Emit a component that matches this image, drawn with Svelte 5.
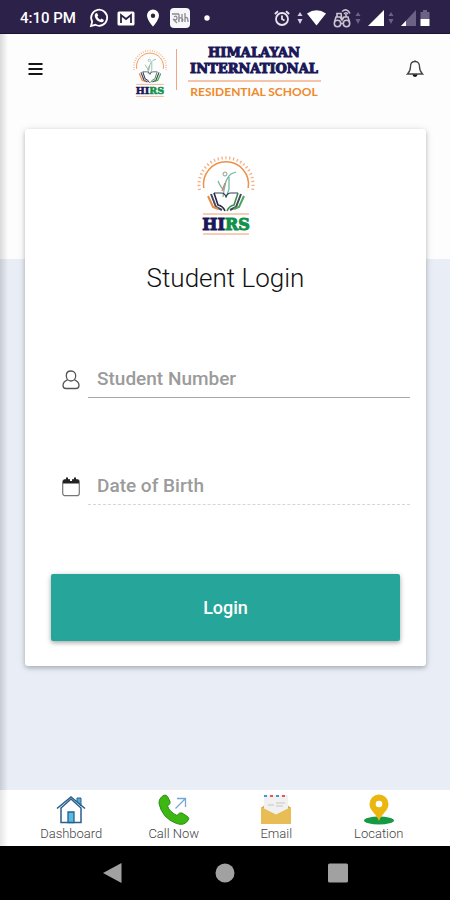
<script lang="ts">
	let studentNumber = $state('');
	let birthDate = $state('');

	const tabs = [
		{ id: 'dashboard', label: 'Dashboard' },
		{ id: 'call', label: 'Call Now' },
		{ id: 'email', label: 'Email' },
		{ id: 'location', label: 'Location' }
	];

	function login(event: SubmitEvent) {
		event.preventDefault();
	}
</script>

{#snippet emblem(cls: string)}
	<svg class={cls} viewBox="0 0 60 80" role="img" aria-label="HIRS">
		<!-- sun -->
		<path d="M7.800 33A22.500 22.500 0 1 1 52.200 33" fill="none" stroke="#f0914a" stroke-width="1.500" />
		<path d="M3.500 35A27 27 0 1 1 56.500 35" fill="none" stroke="#f4b184" stroke-width="3" stroke-dasharray="1.300 2.600" />
		<!-- figure -->
		<path d="M22 26q3 7 6 9l2-9q2-5 5-7l5-2M28 35l-1 7M33 22v12l-3 9" fill="none" stroke="#6fb9a2" stroke-width="1.300" />
		<circle cx="29" cy="19" r="2" fill="none" stroke="#8f9a90" />
		<path d="M26 36l3-8" stroke="#e57a66" stroke-width="1.300" />
		<!-- open book -->
		<path d="M18 38h7q4 0 5 4 1-4 5-4h7" fill="none" stroke="#38405a" stroke-width="1.200" />
		<path d="M18 38l4 12q5 1 7 6" fill="none" stroke="#26264e" stroke-width="1.600" />
		<path d="M42 38l-4 12q-5 1-7 6" fill="none" stroke="#3e8f50" stroke-width="1.600" />
		<path d="M15 39l5 13 6 3M45 39l-5 13-6 3" fill="none" stroke="#44485a" stroke-width="2" />
		<path d="M12 41l5 11 5 2" fill="none" stroke="#e98a45" stroke-width="2" />
		<path d="M48 41l-5 11-5 2" fill="none" stroke="#4ba75b" stroke-width="2" />
		<path d="M7 59h46M7 79h46" stroke="#ef9a72" stroke-width="1.200" />
		<text x="30" y="75" text-anchor="middle"><tspan class="navy">HI</tspan><tspan class="green">RS</tspan></text>
	</svg>
{/snippet}

{#snippet arrows(cls: string)}
	<svg class={cls} width="6" height="14" viewBox="0 0 6 14" aria-hidden="true">
		<path d="M0.500 5L3 1l2.500 4zM0.500 8h5L3 13z" fill="currentColor" />
	</svg>
{/snippet}

<div class="screen">
	<div class="status">
		<span class="time">4:10 PM</span>
		<div class="notices">
			<svg width="20" height="20" viewBox="0 0 20 20" fill="none" stroke="#fff" stroke-width="1.800">
				<path d="M2 18l1.200-4.300a8 8 0 1 1 3.200 3.100z" />
				<path d="M6.500 5.500l1.500-.5 1.300 2.600-1 1.200q1 2 3 2.900l1.100-1.100 2.500 1.300q-.3 2.600-2.600 2.300-5.600-1-6.600-6.300 0-1.500.8-2.400z" fill="#fff" stroke="none" />
			</svg>
			<svg width="20" height="20" viewBox="0 0 20 20">
				<rect x="1.500" y="3.500" width="17" height="14" rx="1.500" fill="#fff" />
				<path d="M5 15V7l5 4 5-4v8" fill="none" stroke="#2c2149" stroke-width="1.800" />
			</svg>
			<svg width="20" height="20" viewBox="0 0 20 20">
				<path d="M10 1.500a6 6 0 0 0-6 6c0 4.500 6 11 6 11s6-6.500 6-11a6 6 0 0 0-6-6zm0 4a2.200 2.200 0 1 1 0 4.400 2.200 2.200 0 0 1 0-4.400z" fill="#fff" />
			</svg>
			<svg width="20" height="20" viewBox="0 0 20 20">
				<rect width="20" height="20" rx="4" fill="#f7f6f8" />
				<path d="M2 6h7M4 9q3-2 3 1t-4 1l4 4M9 6v8q-1-5 2-4t1 4M12 6v8m3-9v9m0-4q3-2 3 4" fill="none" stroke="#8d8a92" stroke-width="1.300" />
			</svg>
			<svg width="20" height="20" viewBox="0 0 20 20"><circle cx="10" cy="10" r="2.700" fill="#fff" /></svg>
		</div>
		<div class="signals">
			<svg width="16" height="16" viewBox="0 0 16 16" fill="none" stroke="#e9e6ef" stroke-width="1.800">
				<circle cx="8" cy="9" r="6" />
				<path d="M8 5.500V9l2.500 1.500M.8 4L4 1.300M15.200 4L12 1.300" />
			</svg>
			<span>
				{@render arrows('bright')}
				<svg width="19" height="16" viewBox="0 0 19 16"><path d="M0 3.500Q9.500-3 19 3.500L9.500 15.500z" fill="#fff" /></svg>
			</span>
			<span>
				<svg width="18" height="20" viewBox="0 0 18 20" fill="none" stroke="#c9c5d2" stroke-width="1.600">
					<circle cx="4.500" cy="15.500" r="3.200" />
					<circle cx="13.500" cy="15.500" r="3.200" />
					<path d="M1.500 14l1.500-5h4l2 3 2-3h4l1.500 5M7 15.500h4M4 9V5.500h4L9 12M9 3.500q5-4 8 2M11 6q2-2.500 4 0M13 6v3" />
				</svg>
				{@render arrows('dim')}
			</span>
			<span>
				<svg width="16" height="16" viewBox="0 0 16 16"><path d="M16 0v16H0z" fill="#fff" /></svg>
				{@render arrows('dim')}
			</span>
			<span>
				<svg width="15" height="16" viewBox="0 0 15 16">
					<path d="M15 0v16H0z" fill="#6b6286" />
					<path d="M5 10.700V16H0z" fill="#fff" />
				</svg>
				<svg width="10" height="16" viewBox="0 0 10 16">
					<path d="M3 0h4v2h2.500v7h-9V2H3z" fill="#6b6286" />
					<path d="M.5 9h9v7h-9z" fill="#fff" />
				</svg>
			</span>
		</div>
	</div>

	<div class="page">
		<header>
			<button class="icon-button" aria-label="Menu">
				<svg width="16" height="14" viewBox="0 0 16 14"><path d="M0.500 2h14M0.500 7h14M0.500 12h14" stroke="#151515" stroke-width="2" /></svg>
			</button>
			<div class="brand">
				{@render emblem('brand-emblem')}
				<div class="brand-name">
					<span class="school">HIMALAYAN<br />INTERNATIONAL</span>
					<span class="kind">RESIDENTIAL SCHOOL</span>
				</div>
			</div>
			<button class="icon-button bell" aria-label="Notifications">
				<svg width="18" height="18" viewBox="0 0 18 18">
					<path d="M9 1.500C5.500 1.500 4.500 4 4.500 6.500c0 4-1 5.500-3 7.500h15c-2-2-3-3.500-3-7.500 0-2.500-1-5-4.500-5zM9 .3v1.200" fill="none" stroke="#444" stroke-width="1.300" />
					<path d="M6.500 14.500h5a2.500 2.500 0 0 1-5 0z" fill="#111" />
				</svg>
			</button>
		</header>

		<main>
			<form class="card" onsubmit={login}>
				{@render emblem('card-emblem')}
				<h1>Student Login</h1>

				<div class="field">
					<label for="student-number" aria-label="Student Number">
						<svg width="18" height="20" viewBox="0 0 18 20" fill="none" stroke="#555" stroke-width="1.300">
							<path d="M9 1C6 1 4.300 3 4.300 5.800S6 11 9 11s4.700-2.400 4.700-5.200S12 1 9 1z" />
							<path d="M5.500 9.800C2.500 11 1 13 1 15.500q0 3 3 3h10q3 0 3-3c0-2.500-1.500-4.500-4.500-5.700" />
						</svg>
					</label>
					<input id="student-number" type="text" placeholder="Student Number" bind:value={studentNumber} />
				</div>

				<div class="field">
					<label for="birth-date" aria-label="Date of Birth">
						<svg width="18" height="20" viewBox="0 0 18 20">
							<rect x=".7" y="2.700" width="16.600" height="16" rx="2.500" fill="none" stroke="#777" stroke-width="1.200" />
							<path d="M1 6.500V4q0-1.500 2-1.500h12q2 0 2 1.500v2.500z" fill="#222" />
							<path d="M5 0.500v4M13 0.500v4" stroke="#222" stroke-width="2" />
							<path d="M8 2h2v2H8z" fill="#fff" />
						</svg>
					</label>
					<input id="birth-date" class="dotted" type="text" placeholder="Date of Birth" bind:value={birthDate} />
				</div>

				<button class="login" type="submit">Login</button>
			</form>
		</main>

		<nav class="tabs">
			{#each tabs as tab (tab.id)}
				<a href="#{tab.id}">
					<svg width="32" height="32" viewBox="0 0 32 32" aria-hidden="true">
						{#if tab.id === 'dashboard'}
							<path d="M22 4h4v8l-4-4z" fill="#4bb3d8" stroke="#2a5f8c" />
							<path d="M6 14v14.500h20V14L16 5z" fill="#fff" stroke="#2a5f8c" stroke-width="1.500" />
							<path d="M2 14.500L16 3l14 11.500" fill="none" stroke="#2a5f8c" stroke-width="1.600" />
							<path d="M13 18h6v10.500h-6z" fill="#54bde4" stroke="#2a5f8c" stroke-width="1.300" />
						{:else if tab.id === 'call'}
							<path d="M3.500 3Q7-.5 9.500 2.500l2.500 5q1 2-2.500 4.500 2 6 9.500 9.500 2.500-3.500 5-2.500l5.500 3.500q2.500 2 0 4.500-3.500 5-11 2.500Q4 24 1 9.500 .5 5.500 3.500 3z" fill="#3db712" stroke="#2b8f12" />
							<path d="M17.500 14.500L27.500 4.500M19 4.500h8.500V13" fill="none" stroke="#74a9d6" stroke-width="1.300" />
						{:else if tab.id === 'email'}
							<path d="M1 14l5-4h20l5 4v15H1z" fill="#d9a63d" />
							<path d="M4 1h24v18l-12 6-12-6z" fill="#f1f1f1" />
							<path d="M4 2h24" stroke="#e4574c" stroke-width="2" stroke-dasharray="3 9" stroke-dashoffset="-6" />
							<path d="M4 2h24" stroke="#3d9bd1" stroke-width="2" stroke-dasharray="3 9" />
							<path d="M8 11h6M16 9h9M16 12h7" stroke="#d3d3d3" stroke-width="1.500" />
							<path d="M1 13l15 7.500L31 13v17H1z" fill="#e8bd56" />
						{:else}
							<ellipse cx="16" cy="26.500" rx="15" ry="4" fill="#159a43" />
							<path d="M16 0.500a9.500 9.500 0 0 0-9.500 9.500c0 7 7 9.500 9.500 17 2.500-7.500 9.500-10 9.500-17A9.500 9.500 0 0 0 16 .5z" fill="#ebb70f" />
							<circle cx="16" cy="10" r="3.300" fill="#fff" />
						{/if}
					</svg>
					<span>{tab.label}</span>
				</a>
			{/each}
		</nav>
	</div>

	<div class="system">
		<button aria-label="Back"><svg width="20" height="22" viewBox="0 0 20 22"><path d="M19.500 1v20L1 11z" fill="#a1a1a1" /></svg></button>
		<button aria-label="Home"><svg width="20" height="22" viewBox="0 0 20 22"><circle cx="10" cy="11" r="9.500" fill="#a1a1a1" /></svg></button>
		<button aria-label="Recent apps"><svg width="20" height="22" viewBox="0 0 20 22"><rect y="1.500" width="20" height="19" rx="1.500" fill="#a1a1a1" /></svg></button>
	</div>
</div>

<style>
	:global(body) {
		margin: 0;
		font-family: Roboto, 'Liberation Sans', sans-serif;
	}

	svg {
		display: block;
		flex: none;
	}

	button {
		padding: 0;
		border: 0;
		background: none;
		font: inherit;
		cursor: pointer;
	}

	.screen {
		display: flex;
		flex-direction: column;
		min-height: 100vh;
	}

	.status {
		display: flex;
		align-items: center;
		height: 34px;
		box-sizing: border-box;
		padding: 2px 20px 0;
		background: #2c2149;
		border-bottom: 1px solid #1b1236;
		color: #fff;
	}

	.time {
		font-size: 15px;
		font-weight: 500;
		margin-right: 13px;
		white-space: nowrap;
	}

	.notices {
		display: flex;
		gap: 7px;
	}

	.signals {
		display: flex;
		align-items: center;
		gap: 7px;
		margin-left: auto;
	}

	.signals span {
		display: flex;
		align-items: center;
		gap: 4px;
	}

	.bright {
		color: #d5d1df;
	}

	.dim {
		color: #6b6286;
	}

	.page {
		flex: 1;
		display: flex;
		flex-direction: column;
		background:
			linear-gradient(to right, rgba(0, 0, 0, 0.14), transparent 8px),
			linear-gradient(#fdfdfd 225px, #e8edf6 225px);
	}

	header {
		display: grid;
		grid-template-columns: 1fr auto 1fr;
		align-items: center;
		height: 69px;
		padding: 0 26px 0 28px;
	}

	.icon-button {
		justify-self: start;
	}

	.bell {
		justify-self: end;
	}

	.brand {
		display: flex;
		align-items: center;
		gap: 8px;
		padding-top: 8px;
	}

	.brand-emblem {
		width: 36px;
		height: 48px;
	}

	.brand-emblem text,
	.card-emblem text {
		font: bold 16px 'DejaVu Serif', serif;
		stroke-width: 1px;
	}

	.navy {
		fill: #1b1858;
		stroke: #1b1858;
	}

	.green {
		fill: #12914a;
		stroke: #12914a;
	}

	.brand-name {
		display: flex;
		flex-direction: column;
		position: relative;
		min-width: 133px;
		padding-left: 12px;
		text-align: center;
	}

	.brand-name::before {
		content: '';
		position: absolute;
		left: 0;
		top: 4px;
		bottom: 10px;
		border-left: 1px solid #eda883;
	}

	.school {
		padding-bottom: 3px;
		border-bottom: 2px solid #f6c4a8;
		font: bold 13px/16px 'DejaVu Serif', serif;
		-webkit-text-stroke: 1px #1b1858;
		color: #1b1858;
	}

	.kind {
		padding-top: 2px;
		font: bold 12px/16px Lato, sans-serif;
		color: #ee8a2c;
	}

	main {
		flex: 1;
		padding: 26px 24px 26px 25px;
	}

	.card {
		display: flex;
		flex-direction: column;
		padding: 26px 16px 25px;
		border-radius: 3px;
		background: #fff;
		box-shadow:
			0 2px 4px rgba(0, 0, 0, 0.2),
			0 1px 8px rgba(0, 0, 0, 0.12);
	}

	.card-emblem {
		align-self: center;
		width: 60px;
		height: 80px;
	}

	h1 {
		margin: 27px 0 68px;
		font-size: 26px;
		line-height: 32px;
		font-weight: 300;
		text-align: center;
		color: #111;
	}

	.field {
		display: flex;
		align-items: center;
		gap: 8px;
		padding-left: 21px;
	}

	.field + .field {
		margin-top: 71px;
	}

	input {
		flex: 1;
		min-width: 0;
		height: 36px;
		box-sizing: border-box;
		padding: 0 9px 2px;
		border: 0;
		border-bottom: 1px solid #a8a8a8;
		border-radius: 0;
		outline: 0;
		background: none;
		font: 500 19px Roboto, sans-serif;
		color: #333;
	}

	input.dotted {
		border-bottom: 1px dashed #d6d6d6;
	}

	input::placeholder {
		color: #9b9b9b;
		opacity: 1;
	}

	.login {
		height: 67px;
		margin: 69px 10px 0;
		border-radius: 2px;
		background: #26a69a;
		box-shadow:
			0 2px 4px rgba(0, 0, 0, 0.25),
			0 1px 6px rgba(0, 0, 0, 0.12);
		font-size: 18px;
		font-weight: 500;
		color: #fff;
	}

	.tabs {
		display: grid;
		grid-template-columns: repeat(4, 1fr);
		height: 56px;
		box-sizing: border-box;
		padding: 4px 20px 0;
		background: linear-gradient(to right, #e6e6e6, #fff 8px);
	}

	.tabs a {
		display: flex;
		flex-direction: column;
		align-items: center;
		font-size: 13px;
		line-height: 16px;
		font-weight: 300;
		color: #444;
		text-decoration: none;
	}

	.system {
		display: flex;
		justify-content: center;
		align-items: center;
		gap: 93px;
		height: 54px;
		background: #000;
	}
</style>
